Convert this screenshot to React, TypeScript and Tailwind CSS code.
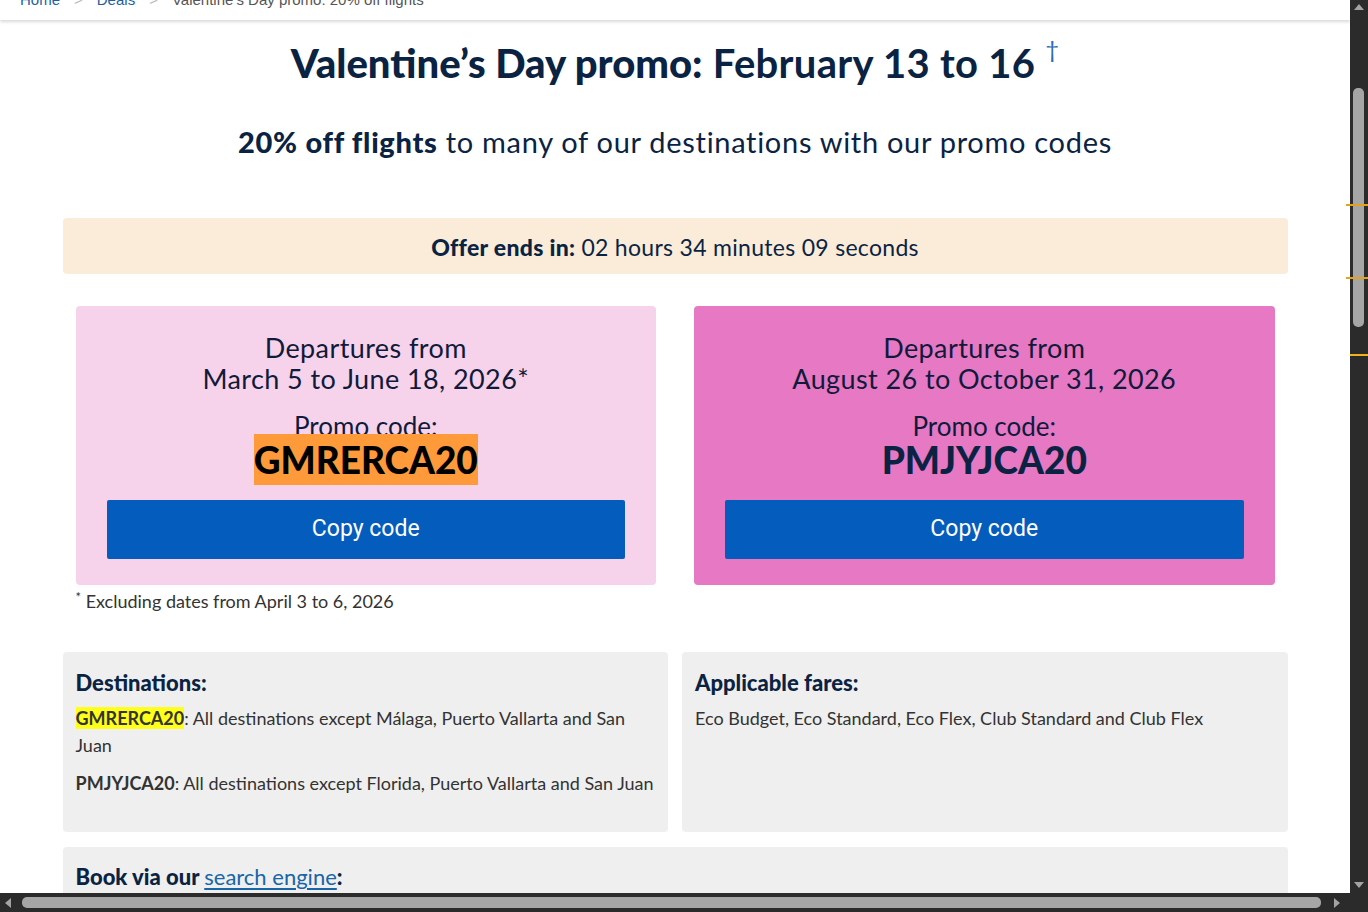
import React from "react";

const navy = "text-[#0b2343]";

function VScroll() {
  return (
    <div className="relative w-[18px] h-full bg-[#2b2b2b] shrink-0">
      <svg className="absolute left-[4px] top-[3px]" width="10" height="7" viewBox="0 0 10 7">
        <path d="M0 7 L5 1 L10 7 Z" fill="#a3a3a3" />
      </svg>
      <div className="absolute left-[3px] top-[88px] w-[11px] h-[239px] rounded-[5px] bg-[#a6a6a6]" />
      <div className="absolute left-[-4px] top-[204px] w-[22px] h-[2px] bg-[#e6a11a]" />
      <div className="absolute left-[-4px] top-[277px] w-[22px] h-[2px] bg-[#e6a11a]" />
      <div className="absolute left-[0px] top-[354px] w-[18px] h-[2px] bg-[#f0b21a]" />
      <svg className="absolute left-[4px] bottom-[4px]" width="10" height="7" viewBox="0 0 10 7">
        <path d="M0 0 L5 6 L10 0 Z" fill="#a3a3a3" />
      </svg>
    </div>
  );
}

function HScroll() {
  return (
    <div className="relative h-[19px] w-full bg-[#2b2b2b] shrink-0">
      <svg className="absolute left-[4px] top-[5px]" width="7" height="10" viewBox="0 0 7 10">
        <path d="M7 0 L1 5 L7 10 Z" fill="#a3a3a3" />
      </svg>
      <div className="absolute left-[22px] top-[4px] w-[1299px] h-[11px] rounded-[5px] bg-[#a6a6a6]" />
      <svg className="absolute left-[1334px] top-[5px]" width="7" height="10" viewBox="0 0 7 10">
        <path d="M0 0 L6 5 L0 10 Z" fill="#a3a3a3" />
      </svg>
    </div>
  );
}

function Breadcrumb() {
  return (
    <div className="h-[20px] bg-white shadow-[0_2px_3px_rgba(0,0,0,0.15)] overflow-hidden relative z-10 shrink-0">
      <div className="flex items-center h-[24px] -mt-[12px] pl-[20px] text-[15px] font-['Liberation_Sans',sans-serif] text-[#555]">
        <span className="text-[#1d5f9f]">Home</span>
        <span className="mx-[14px] text-[#bbb]">&gt;</span>
        <span className="text-[#1d5f9f]">Deals</span>
        <span className="mx-[14px] text-[#bbb]">&gt;</span>
        <span>Valentine’s Day promo: 20% off flights</span>
      </div>
    </div>
  );
}

function PromoCard({
  bg,
  dates,
  code,
  highlight,
}: {
  bg: string;
  dates: string;
  code: string;
  highlight: boolean;
}) {
  return (
    <div className={`${bg} rounded-[4px] h-[279px] pt-[26px] px-[31px] flex flex-col items-center`}>
      <div className="text-[27px] leading-[31px] text-[#101a3a] text-center tracking-[0.4px]">
        <div>Departures from</div>
        <div>{dates}</div>
      </div>
      <div className="mt-[17px] text-[26px] leading-[31px] text-[#101a3a]">Promo code:</div>
      <div className="text-[37px] leading-[36px] font-black">
        {highlight ? (
          <span className="bg-[#ff9a3a] text-black py-[3px]">{code}</span>
        ) : (
          <span className="text-[#0b2343]">{code}</span>
        )}
      </div>
      <div className="mt-[22px] w-full h-[59px] bg-[#045cbc] rounded-[2px] flex items-center justify-center text-white text-[23px] font-['Roboto',sans-serif]">
        Copy code
      </div>
    </div>
  );
}

export default function App() {
  return (
    <div className="w-[1368px] h-[912px] overflow-hidden flex flex-col bg-white font-['Lato',sans-serif]">
      <div className="flex flex-1 min-h-0">
        <div className="flex-1 flex flex-col min-w-0 overflow-hidden">
          <Breadcrumb />
          <div className="w-[1225px] mx-auto">
            <h1 className={`mt-[19px] text-center text-[40px] leading-[48px] ${navy}`}>
              <span className="font-black">Valentine’s Day promo:</span>{" "}
              <span className="font-bold tracking-[0.3px]">February 13 to 16</span>
              <span className="text-[#2a6db5] font-normal text-[24px] leading-[0] ml-[10px] relative -top-[20px]">†</span>
            </h1>
            <p className={`mt-[37px] text-center text-[29px] leading-[36px] ${navy} tracking-[0.7px]`}>
              <span className="font-black">20% off flights</span> to many of our destinations with our promo codes
            </p>
            <div className={`mt-[58px] h-[56px] rounded-[4px] bg-[#faecd8] flex items-center justify-center pt-[3px] text-[23px] tracking-[0.3px] ${navy}`}>
              <span className="font-black">Offer ends in:</span>
              <span className="ml-[6px]">02 hours 34 minutes 09 seconds</span>
            </div>
            <div className="mt-[32px] px-[13px] grid grid-cols-2 gap-[38px]">
              <div>
                <PromoCard bg="bg-[#f6d3eb]" dates="March 5 to June 18, 2026*" code="GMRERCA20" highlight />
                <div className="mt-[4px] text-[18px] leading-[24px] text-[#333]">
                  <sup className="text-[13px]">*</sup> Excluding dates from April 3 to 6, 2026
                </div>
              </div>
              <div>
                <PromoCard bg="bg-[#e678c4]" dates="August 26 to October 31, 2026" code="PMJYJCA20" highlight={false} />
              </div>
            </div>
            <div className="mt-[39px] grid grid-cols-2 gap-[14px]">
              <div className="bg-[#efefef] rounded-[4px] h-[180px] px-[13px] pt-[17px]">
                <h2 className={`text-[22px] leading-[28px] font-black ${navy}`}>Destinations:</h2>
                <p className="mt-[8px] text-[18px] leading-[27px] text-[#333]">
                  <span className="bg-[#ffff1a] font-bold">GMRERCA20</span>: All destinations except Málaga, Puerto Vallarta and San Juan
                </p>
                <p className="mt-[11px] text-[18px] leading-[27px] text-[#333]">
                  <span className="font-bold">PMJYJCA20</span>: All destinations except Florida, Puerto Vallarta and San Juan
                </p>
              </div>
              <div className="bg-[#efefef] rounded-[4px] h-[180px] px-[13px] pt-[17px]">
                <h2 className={`text-[22px] leading-[28px] font-black ${navy}`}>Applicable fares:</h2>
                <p className="mt-[8px] text-[18px] leading-[27px] text-[#333]">
                  Eco Budget, Eco Standard, Eco Flex, Club Standard and Club Flex
                </p>
              </div>
            </div>
            <div className="mt-[15px] bg-[#efefef] rounded-[4px] h-[120px] px-[13px] pt-[16px]">
              <h2 className={`text-[22px] leading-[28px] font-black ${navy}`}>
                Book via our <span className="font-normal text-[#1865a8] underline underline-offset-[3px]">search engine</span>:
              </h2>
            </div>
          </div>
        </div>
        <VScroll />
      </div>
      <HScroll />
    </div>
  );
}
